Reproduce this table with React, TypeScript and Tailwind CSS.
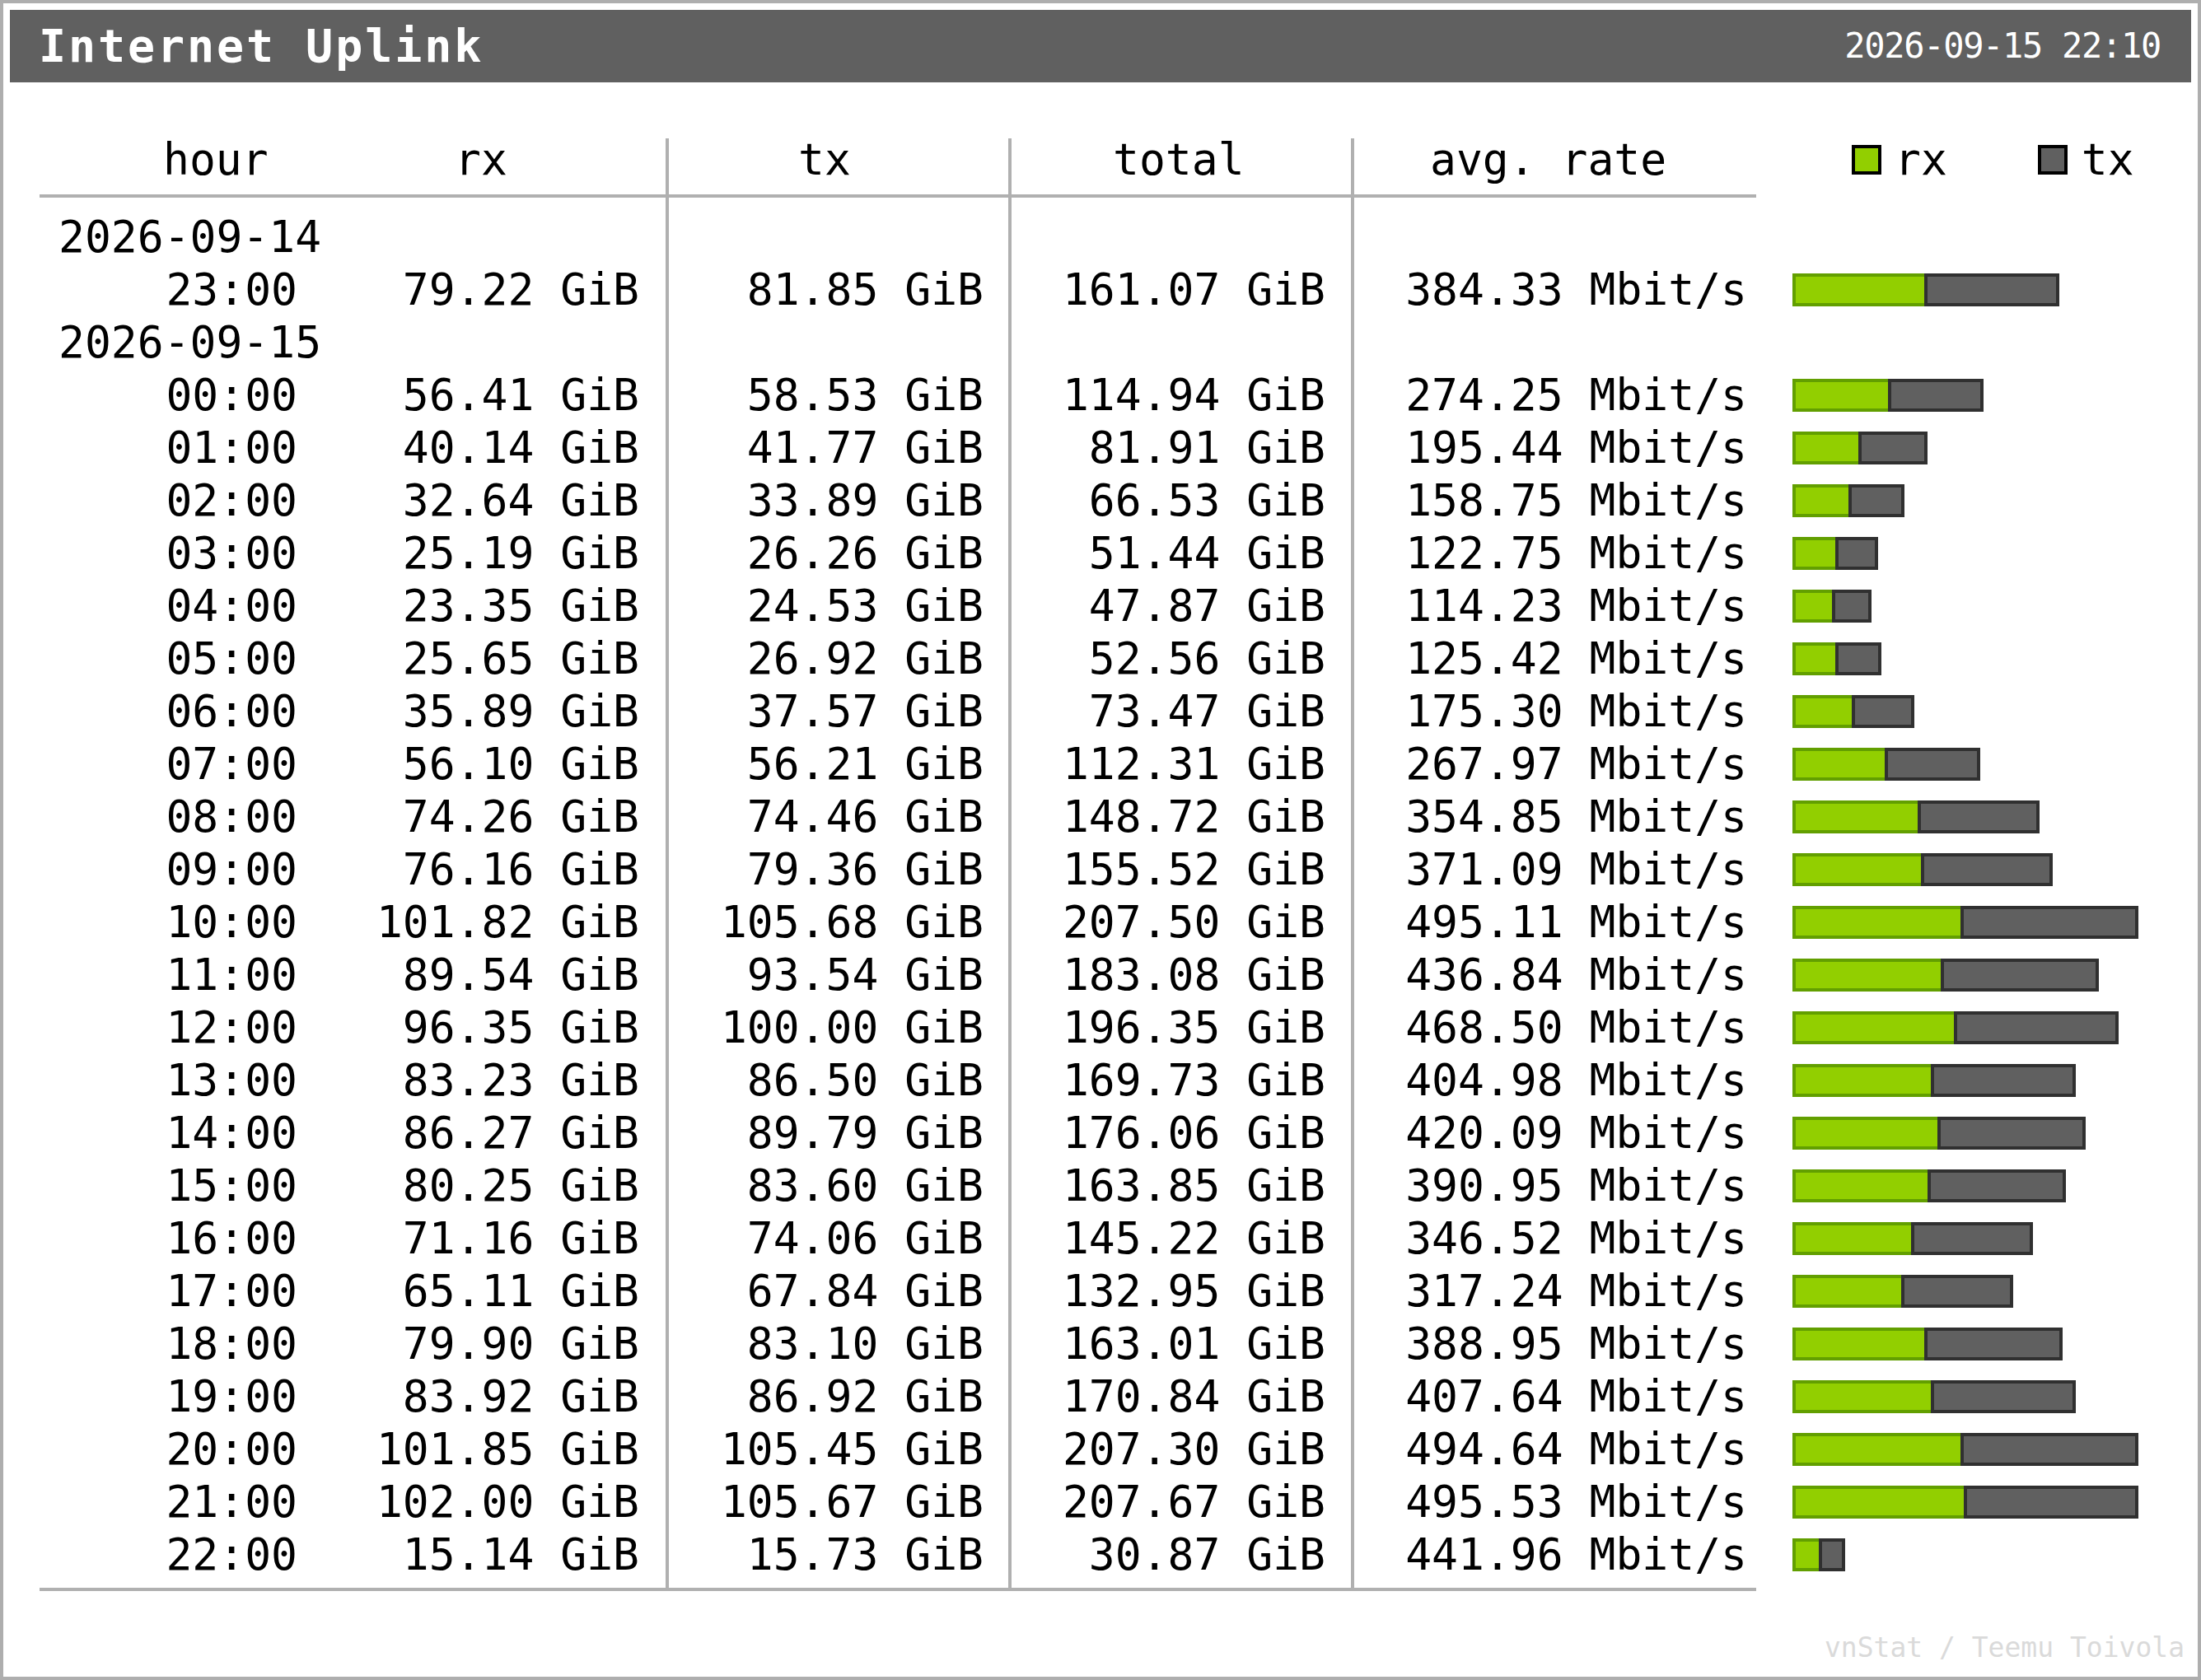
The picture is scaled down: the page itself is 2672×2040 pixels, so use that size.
import React from "react";

const MAX = 207.67;

type Entry = { date: string } | { h: string; rx: number; tx: number; total: number; rate: number };

const raw: [string, number, number, number, number][] = [
  ["00:00", 56.41, 58.53, 114.94, 274.25],
  ["01:00", 40.14, 41.77, 81.91, 195.44],
  ["02:00", 32.64, 33.89, 66.53, 158.75],
  ["03:00", 25.19, 26.26, 51.44, 122.75],
  ["04:00", 23.35, 24.53, 47.87, 114.23],
  ["05:00", 25.65, 26.92, 52.56, 125.42],
  ["06:00", 35.89, 37.57, 73.47, 175.3],
  ["07:00", 56.1, 56.21, 112.31, 267.97],
  ["08:00", 74.26, 74.46, 148.72, 354.85],
  ["09:00", 76.16, 79.36, 155.52, 371.09],
  ["10:00", 101.82, 105.68, 207.5, 495.11],
  ["11:00", 89.54, 93.54, 183.08, 436.84],
  ["12:00", 96.35, 100.0, 196.35, 468.5],
  ["13:00", 83.23, 86.5, 169.73, 404.98],
  ["14:00", 86.27, 89.79, 176.06, 420.09],
  ["15:00", 80.25, 83.6, 163.85, 390.95],
  ["16:00", 71.16, 74.06, 145.22, 346.52],
  ["17:00", 65.11, 67.84, 132.95, 317.24],
  ["18:00", 79.9, 83.1, 163.01, 388.95],
  ["19:00", 83.92, 86.92, 170.84, 407.64],
  ["20:00", 101.85, 105.45, 207.3, 494.64],
  ["21:00", 102.0, 105.67, 207.67, 495.53],
  ["22:00", 15.14, 15.73, 30.87, 441.96],
];

const rows: Entry[] = [
  { date: "2026-09-14" },
  { h: "23:00", rx: 79.22, tx: 81.85, total: 161.07, rate: 384.33 },
  { date: "2026-09-15" },
  ...raw.map(([h, rx, tx, total, rate]) => ({ h, rx, tx, total, rate })),
];

const gib = (v: number) => `${v.toFixed(2)} GiB`;

const cell = "h-[64px] leading-[72px] whitespace-nowrap";
const head = "h-[72px] leading-[52px] border-b-4 border-[#b0b0b0] whitespace-nowrap";

function Bar({ rx, total }: { rx: number; total: number }) {
  const rxW = Math.round((rx / MAX) * 105) * 4;
  const totW = Math.round((total / MAX) * 105) * 4;
  return (
    <div className="flex h-[40px]">
      <div
        className="h-full border-l-4 border-t-4 border-b-4 border-[#629f00] bg-[#92cf00]"
        style={{ width: rxW }}
      />
      <div
        className="h-full border-4 border-[#303030] bg-[#606060]"
        style={{ width: totW - rxW }}
      />
    </div>
  );
}

function Column({
  className,
  header,
  headerPad,
  render,
  bodyPad,
}: {
  className: string;
  header: string;
  headerPad: string;
  render: (r: Entry) => React.ReactNode;
  bodyPad: string;
}) {
  return (
    <div className={`flex flex-col border-b-4 border-[#b0b0b0] ${className}`}>
      <div className={`${head} ${headerPad}`}>{header}</div>
      <div className="h-[12px]" />
      {rows.map((r, i) => (
        <div key={i} className={`${cell} ${bodyPad}`}>
          {render(r)}
        </div>
      ))}
      <div className="h-[12px]" />
    </div>
  );
}

export default function App() {
  return (
    <div className="w-[2672px] h-[2040px] border-4 border-[#aeaeae] bg-white p-[8px] flex flex-col font-['DejaVu_Sans_Mono',monospace] text-black">
      <div className="h-[88px] shrink-0 bg-[#606060] flex items-center justify-between pl-[35px] pr-[37px] text-white">
        <div className="text-[55px] leading-[55px] font-bold tracking-[2.9px]">Internet Uplink</div>
        <div className="text-[42px] leading-[42px] tracking-[-1.3px]">2026-09-15 22:10</div>
      </div>

      <div className="mt-[68px] pl-[36px] flex text-[53px]">
        {/* hour */}
        <div className="flex flex-col border-b-4 border-[#b0b0b0] w-[313px]">
          <div className={`${head} pl-[150px]`}>hour</div>
          <div className="h-[12px]" />
          {rows.map((r, i) =>
            "date" in r ? (
              <div key={i} className={`${cell} pl-[23px]`}>
                {r.date}
              </div>
            ) : (
              <div key={i} className={`${cell} text-right`}>
                {r.h}
              </div>
            )
          )}
          <div className="h-[12px]" />
        </div>

        <Column
          className="w-[447px]"
          header="rx"
          headerPad="pl-[191px]"
          bodyPad="text-right pr-[32px]"
          render={(r) => ("date" in r ? "" : gib(r.rx))}
        />
        <Column
          className="w-[416px] border-l-4"
          header="tx"
          headerPad="pl-[157px]"
          bodyPad="text-right pr-[30px]"
          render={(r) => ("date" in r ? "" : gib(r.tx))}
        />
        <Column
          className="w-[416px] border-l-4"
          header="total"
          headerPad="pl-[123px]"
          bodyPad="text-right pr-[31px]"
          render={(r) => ("date" in r ? "" : gib(r.total))}
        />
        <Column
          className="w-[492px] border-l-4"
          header="avg. rate"
          headerPad="pl-[92px]"
          bodyPad="text-right pr-[11px]"
          render={(r) => ("date" in r ? "" : `${r.rate.toFixed(2)} Mbit/s`)}
        />

        {/* bars + legend */}
        <div className="flex flex-col flex-1 pl-[44px]">
          <div className="h-[76px] flex items-start">
            <div className="ml-[72px] mt-[8px] w-[36px] h-[36px] border-4 border-black bg-[#92cf00]" />
            <div className="ml-[16px] leading-[52px]">rx</div>
            <div className="ml-[110px] mt-[8px] w-[36px] h-[36px] border-4 border-black bg-[#606060]" />
            <div className="ml-[17px] leading-[52px]">tx</div>
          </div>
          <div className="h-[12px]" />
          {rows.map((r, i) => (
            <div key={i} className="h-[64px] flex items-center">
              {"date" in r ? null : <Bar rx={r.rx} total={r.total} />}
            </div>
          ))}
        </div>
      </div>

      <div className="mt-[52px] text-[33px] leading-[33px] text-right pr-[8px] text-[#dadada]">
        vnStat / Teemu Toivola
      </div>
    </div>
  );
}
